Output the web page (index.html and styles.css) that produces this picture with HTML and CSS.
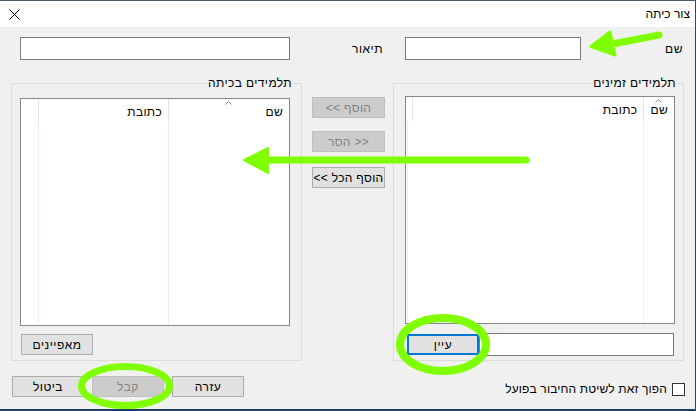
FILE: index.html
```html
<!DOCTYPE html>
<html lang="he">
<head>
<meta charset="utf-8">
<title>צור כיתה</title>
<link rel="stylesheet" href="styles.css">
</head>
<body>
<div class="window">
  <div class="titlebar">
    <svg class="close" width="11" height="11" viewBox="0 0 11 11"><path d="M0.5 0.5 L10.5 10.5 M10.5 0.5 L0.5 10.5" stroke="#000" stroke-width="1" fill="none"/></svg>
    <span class="title" dir="rtl">צור כיתה</span>
  </div>

  <div class="row-top">
    <input class="field field-desc" type="text">
    <label class="lbl lbl-desc" dir="rtl">תיאור</label>
    <input class="field field-name" type="text">
    <label class="lbl lbl-name" dir="rtl">שם</label>
  </div>

  <div class="row-groups">
    <fieldset class="group group-left" dir="rtl">
      <legend class="legend-left">תלמידים בכיתה</legend>
      <div class="list list-left">
        <div class="list-head">
          <div class="hcol cl-name">שם<svg class="sort" width="7" height="4" viewBox="0 0 7 4"><path d="M0.5 3.5 L3.5 0.5 L6.5 3.5" stroke="#8a8a8a" fill="none"/></svg></div>
          <div class="hcol cl-addr">כתובת</div>
          <div class="hcol cl-rest"></div>
        </div>
        <div class="list-body">
          <div class="bcol cl-name"></div>
          <div class="bcol cl-addr"></div>
          <div class="bcol cl-rest"></div>
        </div>
      </div>
      <button class="btn btn-props" dir="rtl">מאפיינים</button>
    </fieldset>

    <div class="mid">
      <button class="btn btn-mid btn-disabled" dir="ltr">&lt;&lt; הוסף</button>
      <button class="btn btn-mid btn-disabled btn-remove" dir="ltr">הסר &gt;&gt;</button>
      <button class="btn btn-mid btn-addall" dir="ltr">&lt;&lt; הוסף הכל</button>
    </div>

    <fieldset class="group group-right" dir="rtl">
      <legend class="legend-right">תלמידים זמינים</legend>
      <div class="list list-right">
        <div class="list-head">
          <div class="hcol cr-name">שם<svg class="sort" width="7" height="4" viewBox="0 0 7 4"><path d="M0.5 3.5 L3.5 0.5 L6.5 3.5" stroke="#8a8a8a" fill="none"/></svg></div>
          <div class="hcol cr-addr">כתובת</div>
          <div class="hcol cr-rest"></div>
        </div>
        <div class="list-body">
          <div class="bcol cr-name"></div>
          <div class="bcol cr-addr"></div>
          <div class="bcol cr-rest"></div>
        </div>
      </div>
      <div class="browse-row" dir="ltr">
        <button class="btn btn-browse" dir="rtl">עיין</button>
        <input class="field field-browse" type="text">
      </div>
    </fieldset>
  </div>

  <div class="row-bottom">
    <button class="btn btn-bottom" dir="rtl">ביטול</button>
    <button class="btn btn-bottom btn-disabled" dir="rtl">קבל</button>
    <button class="btn btn-bottom" dir="rtl">עזרה</button>
    <div class="check-wrap">
      <span class="check-label" dir="rtl">הפוך זאת לשיטת החיבור בפועל</span>
      <span class="checkbox"></span>
    </div>
  </div>
</div>

<svg class="annot" width="696" height="411" viewBox="0 0 696 411">
  <g fill="#80ff00" stroke="#80ff00" stroke-linejoin="round" stroke-linecap="round">
    <line x1="615" y1="43.5" x2="659" y2="35" stroke-width="7"/>
    <polygon points="591,46.5 610,32 615,55" stroke-width="3"/>
    <line x1="266" y1="160" x2="526" y2="160" stroke-width="7"/>
    <polygon points="244,160 268,148 268,173" stroke-width="2"/>
  </g>
  <g fill="none" stroke="#80ff00">
    <ellipse cx="125.5" cy="386" rx="44" ry="19.5" stroke-width="7"/>
    <ellipse cx="443" cy="344.5" rx="43" ry="26.5" stroke-width="8"/>
  </g>
</svg>
</body>
</html>
```
FILE: styles.css
```css
* { box-sizing: border-box; }
html, body { margin: 0; padding: 0; }
body {
  position: relative;
  width: 696px;
  height: 411px;
  overflow: hidden;
  background: #f0f0f0;
  font-family: "Liberation Sans", Arial, sans-serif;
  font-size: 12px;
  color: #000;
}
.window {
  width: 696px;
  height: 411px;
  background: #f0f0f0;
  border-top: 1px solid #4b5c6c;
  border-right: 1px solid #2b4a6a;
  border-bottom: 2px solid #1f3f5f;
}
.titlebar {
  height: 26px;
  background: #fff;
  display: flex;
  align-items: center;
  justify-content: space-between;
  padding: 0 5px 0 9px;
}
.close { display: block; }
.title { letter-spacing: 0; }

.row-top {
  display: flex;
  align-items: center;
  padding: 10px 0 0 20px;
}
.field {
  display: block;
  height: 23px;
  margin: 0;
  padding: 0;
  border: 1px solid #7a7a7a;
  background: #fff;
  outline: none;
}
.field-desc { width: 270px; }
.field-name { width: 176px; margin-left: 22px; }
.lbl { display: block; text-align: right; letter-spacing: 0.5px; }
.lbl-desc { width: 93px; }
.lbl-name { width: 102px; }

.row-groups {
  display: flex;
  align-items: flex-start;
  margin-top: 16px;
  padding-left: 11px;
}
.group {
  width: 291px;
  height: 285px;
  margin: 0;
  min-width: 0;
  border: 1px solid #dcdcdc;
}
.group-left { padding: 8px 11px 5px 8px; }
.group-right { padding: 6px 8px 4px 11px; }
legend {
  padding: 0 1px;
  line-height: 14px;
  height: 14px;
  letter-spacing: 0.4px;
}
.legend-left { margin-right: -3px; }
.legend-right { margin-right: -2px; }

.list {
  width: 270px;
  height: 228px;
  border: 1px solid #828790;
  background: #fff;
  display: flex;
  flex-direction: column;
}
.list-head { height: 24px; display: flex; }
.list-body { flex: 1; display: flex; }
.hcol {
  position: relative;
  line-height: 24px;
  padding: 1px 6px 0 0;
  border-left: 1px solid #e5e5e5;
  letter-spacing: 0.3px;
}
.bcol { border-left: 1px solid #eaf0f9; }
.cl-name { width: 121px; }
.cl-addr { width: 130px; }
.cl-rest { flex: 1; border-left: none; }
.cr-name { width: 31px; }
.cr-addr { width: 236px; }
.cr-rest { flex: 1; border-left: none; }
.sort {
  position: absolute;
  top: 2px;
  left: 50%;
  margin-left: -4px;
}

.btn {
  display: block;
  height: 21px;
  margin: 0;
  padding: 0;
  font: inherit;
  letter-spacing: 0.5px;
  white-space: nowrap;
  color: #000;
  background: #e1e1e1;
  border: 1px solid #adadad;
  text-align: center;
}
.btn-disabled {
  background: #cccccc;
  border-color: #bfbfbf;
  color: #838383;
}
.btn-props {
  width: 72px;
  margin: 8px auto 0 1px;
}
.mid {
  width: 91px;
  display: flex;
  flex-direction: column;
  align-items: flex-start;
  padding: 21px 0 0 10px;
}
.btn-mid { width: 73px; letter-spacing: 0.3px; }
.btn-remove { margin-top: 13px; }
.btn-addall { margin-top: 15px; }

.browse-row {
  display: flex;
  align-items: flex-start;
  margin-top: 9px;
}
.btn-browse {
  width: 72px;
  margin: 1px 0 0 2px;
  border: 2px solid #0078d7;
}
.field-browse { width: 195px; }

.row-bottom {
  display: flex;
  align-items: flex-start;
  gap: 8px;
  margin-top: 15px;
  padding: 0 10px 0 12px;
}
.btn-bottom { width: 72px; }
.check-wrap {
  margin-left: auto;
  margin-top: 7px;
  display: flex;
  align-items: center;
  gap: 5px;
}
.check-label { line-height: 13px; letter-spacing: 0.15px; }
.checkbox {
  display: block;
  width: 13px;
  height: 13px;
  border: 1px solid #333;
  background: #fff;
}
.annot {
  position: absolute;
  top: 0;
  left: 0;
  pointer-events: none;
}
```
